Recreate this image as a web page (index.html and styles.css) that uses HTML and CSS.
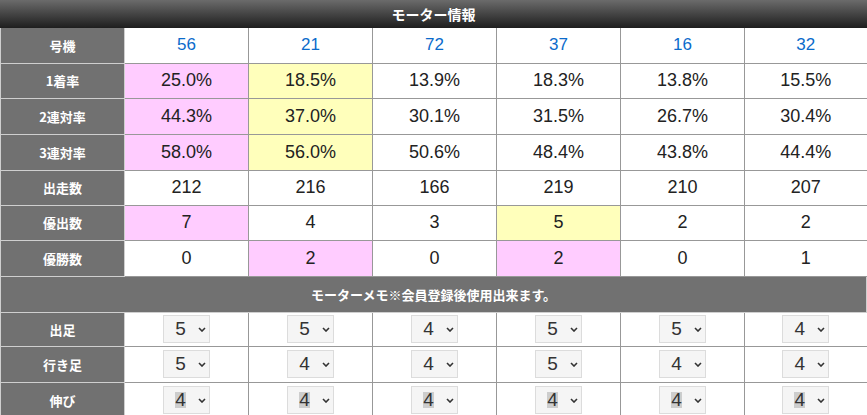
FILE: index.html
```html
<!DOCTYPE html>
<html lang="ja">
<head>
<meta charset="utf-8">
<title>モーター情報</title>
<link rel="stylesheet" href="styles.css">
</head>
<body>
<div class="motor">
  <div class="title">モーター情報</div>
  <table class="grid">
    <colgroup><col class="c"><col class="c"><col class="c"><col class="c"><col class="c"><col class="c"><col></colgroup>
    <tr class="r35">
      <th>号機</th>
      <td class="no">56</td><td class="no">21</td><td class="no">72</td><td class="no">37</td><td class="no">16</td><td class="no">32</td>
    </tr>
    <tr class="r35">
      <th>1着率</th>
      <td class="pink">25.0%</td><td class="yellow">18.5%</td><td>13.9%</td><td>18.3%</td><td>13.8%</td><td>15.5%</td>
    </tr>
    <tr class="r36">
      <th>2連対率</th>
      <td class="pink">44.3%</td><td class="yellow">37.0%</td><td>30.1%</td><td>31.5%</td><td>26.7%</td><td>30.4%</td>
    </tr>
    <tr class="r36">
      <th>3連対率</th>
      <td class="pink">58.0%</td><td class="yellow">56.0%</td><td>50.6%</td><td>48.4%</td><td>43.8%</td><td>44.4%</td>
    </tr>
    <tr class="r35">
      <th>出走数</th>
      <td>212</td><td>216</td><td>166</td><td>219</td><td>210</td><td>207</td>
    </tr>
    <tr class="r35">
      <th>優出数</th>
      <td class="pink">7</td><td>4</td><td>3</td><td class="yellow">5</td><td>2</td><td>2</td>
    </tr>
    <tr class="r36">
      <th>優勝数</th>
      <td>0</td><td class="pink">2</td><td>0</td><td class="pink">2</td><td>0</td><td>1</td>
    </tr>
    <tr class="r36">
      <th colspan="7" class="memo">モーターメモ※会員登録後使用出来ます。</th>
    </tr>
    <tr class="r34">
      <th>出足</th>
      <td><span class="sel"><span class="v">5</span><svg class="chev" viewBox="0 0 8 5"><path d="M1 1l3 3 3-3"/></svg></span></td>
      <td><span class="sel"><span class="v">5</span><svg class="chev" viewBox="0 0 8 5"><path d="M1 1l3 3 3-3"/></svg></span></td>
      <td><span class="sel"><span class="v">4</span><svg class="chev" viewBox="0 0 8 5"><path d="M1 1l3 3 3-3"/></svg></span></td>
      <td><span class="sel"><span class="v">5</span><svg class="chev" viewBox="0 0 8 5"><path d="M1 1l3 3 3-3"/></svg></span></td>
      <td><span class="sel"><span class="v">5</span><svg class="chev" viewBox="0 0 8 5"><path d="M1 1l3 3 3-3"/></svg></span></td>
      <td><span class="sel"><span class="v">4</span><svg class="chev" viewBox="0 0 8 5"><path d="M1 1l3 3 3-3"/></svg></span></td>
    </tr>
    <tr class="r36">
      <th>行き足</th>
      <td><span class="sel"><span class="v">5</span><svg class="chev" viewBox="0 0 8 5"><path d="M1 1l3 3 3-3"/></svg></span></td>
      <td><span class="sel"><span class="v">4</span><svg class="chev" viewBox="0 0 8 5"><path d="M1 1l3 3 3-3"/></svg></span></td>
      <td><span class="sel"><span class="v">4</span><svg class="chev" viewBox="0 0 8 5"><path d="M1 1l3 3 3-3"/></svg></span></td>
      <td><span class="sel"><span class="v">5</span><svg class="chev" viewBox="0 0 8 5"><path d="M1 1l3 3 3-3"/></svg></span></td>
      <td><span class="sel"><span class="v">4</span><svg class="chev" viewBox="0 0 8 5"><path d="M1 1l3 3 3-3"/></svg></span></td>
      <td><span class="sel"><span class="v">4</span><svg class="chev" viewBox="0 0 8 5"><path d="M1 1l3 3 3-3"/></svg></span></td>
    </tr>
    <tr class="r36">
      <th>伸び</th>
      <td><span class="sel"><span class="v hl">4</span><svg class="chev" viewBox="0 0 8 5"><path d="M1 1l3 3 3-3"/></svg></span></td>
      <td><span class="sel"><span class="v hl">4</span><svg class="chev" viewBox="0 0 8 5"><path d="M1 1l3 3 3-3"/></svg></span></td>
      <td><span class="sel"><span class="v hl">4</span><svg class="chev" viewBox="0 0 8 5"><path d="M1 1l3 3 3-3"/></svg></span></td>
      <td><span class="sel"><span class="v hl">4</span><svg class="chev" viewBox="0 0 8 5"><path d="M1 1l3 3 3-3"/></svg></span></td>
      <td><span class="sel"><span class="v hl">4</span><svg class="chev" viewBox="0 0 8 5"><path d="M1 1l3 3 3-3"/></svg></span></td>
      <td><span class="sel"><span class="v hl">4</span><svg class="chev" viewBox="0 0 8 5"><path d="M1 1l3 3 3-3"/></svg></span></td>
    </tr>
  </table>
</div>
</body>
</html>
```

FILE: styles.css
```css
html, body {
  margin: 0;
  padding: 0;
  background: #fff;
}
body {
  font-family: "Liberation Sans", Arial, "Noto Sans CJK JP", sans-serif;
  color: #222;
  overflow: hidden;
}
.motor {
  width: 867px;
}
.title {
  height: 28px;
  line-height: 29px;
  text-align: center;
  color: #fff;
  font-family: "Noto Sans CJK JP", sans-serif;
  font-weight: 700;
  font-size: 14px;
  background: linear-gradient(to bottom, #6b6b6b 0%, #444 50%, #1e1e1e 100%);
}
.grid {
  width: 867px;
  border-collapse: collapse;
  table-layout: fixed;
}
.grid col.c {
  width: 124px;
}
.grid th {
  background: #717171;
  color: #fff;
  font-family: "Noto Sans CJK JP", sans-serif;
  font-weight: 700;
  font-size: 13px;
  border: 1px solid #cfcfcf;
  padding: 0;
  text-align: center;
}
.grid td {
  border: 1px solid #989898;
  text-align: center;
  padding: 0;
  font-size: 18px;
  color: #222;
  background: #fff;
}
.grid tr > td:last-child {
  border-right: 0;
}
.grid tr:first-child > * {
  border-top: 0;
}
.grid th:first-child {
  border-left: 1px solid #cfcfcf;
}
.r34 { height: 34px; }
.r35 { height: 35px; }
.r36 { height: 36px; }
.grid td.no {
  color: #0b6bcb;
  font-size: 17px;
}
.grid td.pink {
  background: #ffccff;
}
.grid td.yellow {
  background: #ffffbb;
}
.grid th.memo {
  text-align: center;
}
.sel {
  display: inline-flex;
  align-items: center;
  box-sizing: border-box;
  width: 47px;
  height: 28px;
  background: #f5f5f5;
  border: 1px solid #dcdcdc;
  padding-left: 11px;
  vertical-align: middle;
}
.sel .v {
  font-size: 19px;
  line-height: 16px;
  color: #333;
  width: 11px;
  text-align: center;
}
.sel .v.hl {
  background: #cdcdcd;
}
.sel .chev {
  width: 8px;
  height: 5px;
  margin-left: 12px;
  fill: none;
  stroke: #333;
  stroke-width: 1.6;
}
```
